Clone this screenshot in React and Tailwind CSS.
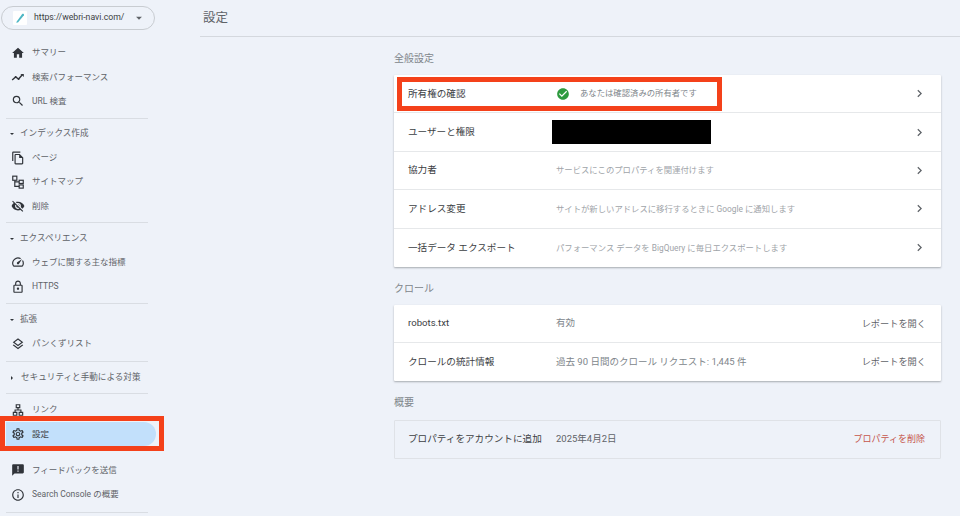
import {
  MdHome, MdSearch, MdOutlineFileCopy, MdVisibilityOff,
  MdOutlineSpeed, MdOutlineLock, MdOutlineLayers, MdOutlineLan, MdOutlineSettings, MdAnnouncement,
  MdInfoOutline, MdChevronRight, MdCheckCircle, MdArrowDropDown,
} from 'react-icons/md'

const font = { fontFamily: 'Roboto, "Noto Sans CJK JP", sans-serif' }

function PerfIcon({ className }) {
  return (
    <svg viewBox="0 0 24 24" className={className} fill="none" stroke="currentColor" strokeWidth="2.4">
      <path d="M2 17l6-5 5 3.5 6-7" />
      <path d="M16 7h6v5" fill="currentColor" stroke="none" />
      <circle cx="8" cy="12" r="1.6" fill="currentColor" stroke="none" />
      <circle cx="13" cy="15.5" r="1.6" fill="currentColor" stroke="none" />
    </svg>
  )
}

function SitemapIcon({ className }) {
  return (
    <svg viewBox="0 0 24 24" className={className} fill="none" stroke="currentColor" strokeWidth="2">
      <rect x="3" y="2" width="7" height="7" />
      <rect x="14" y="9" width="7" height="5.5" />
      <rect x="14" y="17" width="7" height="5.5" />
      <path d="M6.5 9v10.500h7.500M6.500 11.800h7.500" />
    </svg>
  )
}

function NavItem({ icon: Icon, label, active }) {
  return (
    <div className={`relative flex items-center h-[24.3px] pl-[11px] ${active ? 'text-[#3c4043]' : 'text-[#5f6368]'}`}>
      {active && <div className="absolute left-[6px] right-[44px] top-0 bottom-0 bg-[#c2e0fb] rounded-r-full" />}
      {active && <div className="absolute left-0 top-[-6px] bottom-[-5px] w-[164px] border-[5px] border-[#f4411a]" />}
      <Icon className="relative w-[14px] h-[14px] text-[#30343a] shrink-0" />
      <span className="relative ml-[7px] text-[8.5px]">{label}</span>
    </div>
  )
}

function NavHeading({ label, closed }) {
  return (
    <div className="flex items-center h-[24px] pl-[10px] text-[8.6px] text-[#5f6368]">
      <span className={`w-0 h-0 border-[2.5px] border-transparent ${closed ? 'border-l-[#30343a] ml-[1px] mr-[6px]' : 'border-t-[#30343a] mt-[3px] mr-[6px]'}`} />
      <span>{label}</span>
    </div>
  )
}

function Divider() {
  return <div className="h-px bg-[#d9dde3] ml-[6px] mr-[52px]" />
}

function SettingRow({ label, children, right, last, height = 'h-[38.4px]', inset }) {
  return (
    <div className={`relative flex items-center pr-[15px] ${height} ${inset ? 'pl-[13px]' : 'pl-[14px]'} ${last ? '' : 'border-b border-[#e6e8ea]'}`}>
      <div className="w-[144px] text-[9.6px] text-[#3c4043] shrink-0">{label}</div>
      <div className="flex-1 flex items-center min-w-0">{children}</div>
      {right || <MdChevronRight className="w-[15px] h-[15px] text-[#5f6368] mr-[-1px]" />}
    </div>
  )
}

function SectionTitle({ children, className }) {
  return <div className={`text-[10px] text-[#80868b] ${className}`}>{children}</div>
}

export default function App() {
  return (
    <div className="flex w-[960px] h-[516px] overflow-hidden bg-[#eef2f9]" style={font}>
      <aside className="w-[200px] shrink-0 flex flex-col">
        <div className="flex items-center ml-[1px] mt-[6px] w-[154px] h-[24px] border border-[#c8ccd1] rounded-full pl-[11px]">
          <span className="flex items-center justify-center w-[14px] h-[14px] bg-white rounded-[1px]">
            <svg viewBox="0 0 14 14" className="w-[14px] h-[14px]">
              <path d="M3 11.500L9 3.200c.8-.8 2.300-.2 1.900 1L5 11.500z" fill="#4db6c4" />
            </svg>
          </span>
          <span className="ml-[7px] text-[8.7px] text-[#3c4043]">https://webri-navi.com/</span>
          <MdArrowDropDown className="ml-[8px] w-[14px] h-[14px] text-[#5f6368]" />
        </div>
        <div className="mt-[10.5px]">
          <NavItem icon={MdHome} label="サマリー" />
          <NavItem icon={PerfIcon} label="検索パフォーマンス" />
          <NavItem icon={MdSearch} label="URL 検査" />
        </div>
        <div className="mt-[4.5px]"><Divider /></div>
        <div className="mt-[2.5px]">
          <NavHeading label="インデックス作成" />
          <NavItem icon={MdOutlineFileCopy} label="ページ" />
          <NavItem icon={SitemapIcon} label="サイトマップ" />
          <NavItem icon={MdVisibilityOff} label="削除" />
        </div>
        <div className="mt-[3.5px]"><Divider /></div>
        <div className="mt-[3.5px]">
          <NavHeading label="エクスペリエンス" />
          <NavItem icon={MdOutlineSpeed} label="ウェブに関する主な指標" />
          <NavItem icon={MdOutlineLock} label="HTTPS" />
        </div>
        <div className="mt-[4.5px]"><Divider /></div>
        <div className="mt-[3px]">
          <NavHeading label="拡張" />
          <NavItem icon={MdOutlineLayers} label="パンくずリスト" />
        </div>
        <div className="mt-[5px]"><Divider /></div>
        <div className="mt-[4px]">
          <NavHeading label="セキュリティと手動による対策" closed />
        </div>
        <div className="mt-[3px]"><Divider /></div>
        <div className="mt-[4px]">
          <NavItem icon={MdOutlineLan} label="リンク" />
          <NavItem icon={MdOutlineSettings} label="設定" active />
        </div>
        <div className="mt-[12px]">
          <NavItem icon={MdAnnouncement} label="フィードバックを送信" />
          <NavItem icon={MdInfoOutline} label="Search Console の概要" />
        </div>
        <div className="mt-[5px]"><Divider /></div>
      </aside>

      <main className="flex-1 min-w-0">
        <header className="h-[37px] border-b border-[#d4d8de] pl-[3px] pt-[9px] text-[12.5px] leading-[17px] text-[#5f6368]">設定</header>
        <div className="w-[547px] ml-[194px]">
          <SectionTitle className="mt-[14px] h-[24px] pt-[1px] leading-[14px]">全般設定</SectionTitle>
          <div className="bg-white rounded-[1px] shadow-[0_1px_2px_rgba(60,64,67,0.4)]">
            <SettingRow label="所有権の確認">
              <div className="absolute left-[3px] top-[2px] w-[325px] h-[34px] border-[5px] border-[#f4411a]" />
              <MdCheckCircle className="ml-[4px] w-[14px] h-[14px] text-[#2e9a3f]" />
              <span className="ml-[10px] text-[8.35px] text-[#80868b]">あなたは確認済みの所有者です</span>
            </SettingRow>
            <SettingRow label="ユーザーと権限">
              <div className="w-[159px] h-[24px] bg-black" />
            </SettingRow>
            <SettingRow label="協力者">
              <span className="ml-[4px] text-[8.35px] text-[#a0a4a9]">サービスにこのプロパティを関連付けます</span>
            </SettingRow>
            <SettingRow label="アドレス変更">
              <span className="ml-[4px] text-[8.35px] text-[#a0a4a9]">サイトが新しいアドレスに移行するときに Google に通知します</span>
            </SettingRow>
            <SettingRow label="一括データ エクスポート" last>
              <span className="ml-[4px] text-[8.35px] text-[#a0a4a9]">パフォーマンス データを BigQuery に毎日エクスポートします</span>
            </SettingRow>
          </div>

          <SectionTitle className="mt-[14px] h-[24px] pt-[1px] leading-[14px]">クロール</SectionTitle>
          <div className="bg-white rounded-[1px] shadow-[0_1px_2px_rgba(60,64,67,0.4)]">
            <SettingRow label="robots.txt" height="h-[38px]" right={<span className="text-[9.2px] text-[#5f6368]">レポートを開く</span>}>
              <span className="ml-[4px] text-[9.5px] text-[#80868b]">有効</span>
            </SettingRow>
            <SettingRow label="クロールの統計情報" last height="h-[38px]" right={<span className="text-[9.2px] text-[#5f6368]">レポートを開く</span>}>
              <span className="ml-[4px] text-[9.5px] text-[#80868b]">過去 90 日間のクロール リクエスト: 1,445 件</span>
            </SettingRow>
          </div>

          <SectionTitle className="mt-[14px] h-[25px] pt-[1px] leading-[14px]">概要</SectionTitle>
          <div className="border border-[#dfe2e7] rounded-[1px]">
            <SettingRow label="プロパティをアカウントに追加" last height="h-[37px]" inset right={<span className="text-[9px] text-[#c5554b]">プロパティを削除</span>}>
              <span className="ml-[4px] text-[9.5px] text-[#5f6368]">2025年4月2日</span>
            </SettingRow>
          </div>
        </div>
      </main>
    </div>
  )
}
